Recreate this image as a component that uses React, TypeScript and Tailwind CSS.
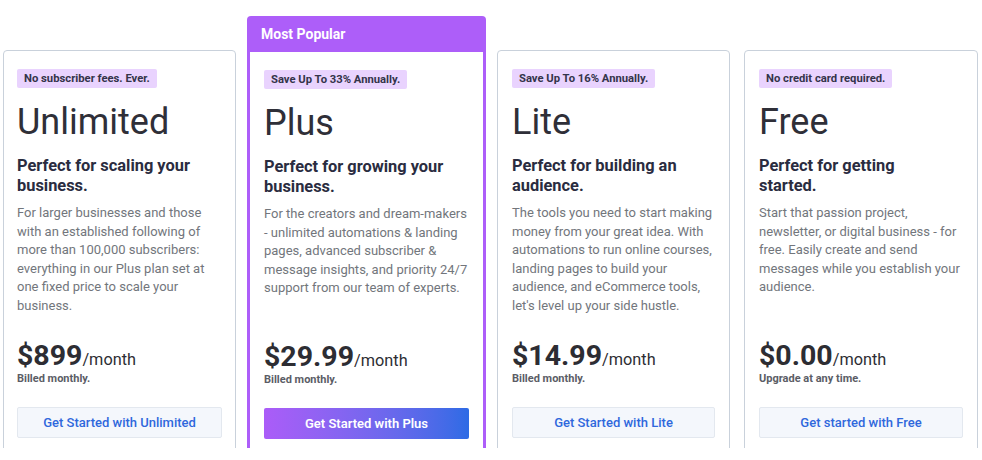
type Plan = {
  badge: string;
  name: string;
  tagline: string;
  desc: string;
  price: string;
  note: string;
  cta: string;
  popular?: boolean;
};

const plans: Plan[] = [
  {
    badge: "No subscriber fees. Ever.",
    name: "Unlimited",
    tagline: "Perfect for scaling your business.",
    desc: "For larger businesses and those with an established following of more than 100,000 subscribers: everything in our Plus plan set at one fixed price to scale your business.",
    price: "$899",
    note: "Billed monthly.",
    cta: "Get Started with Unlimited",
  },
  {
    badge: "Save Up To 33% Annually.",
    name: "Plus",
    tagline: "Perfect for growing your business.",
    desc: "For the creators and dream-makers - unlimited automations & landing pages, advanced subscriber & message insights, and priority 24/7 support from our team of experts.",
    price: "$29.99",
    note: "Billed monthly.",
    cta: "Get Started with Plus",
    popular: true,
  },
  {
    badge: "Save Up To 16% Annually.",
    name: "Lite",
    tagline: "Perfect for building an audience.",
    desc: "The tools you need to start making money from your great idea. With automations to run online courses, landing pages to build your audience, and eCommerce tools, let's level up your side hustle.",
    price: "$14.99",
    note: "Billed monthly.",
    cta: "Get Started with Lite",
  },
  {
    badge: "No credit card required.",
    name: "Free",
    tagline: "Perfect for getting started.",
    desc: "Start that passion project, newsletter, or digital business - for free. Easily create and send messages while you establish your audience.",
    price: "$0.00",
    note: "Upgrade at any time.",
    cta: "Get started with Free",
  },
];

function CardBody({ plan }: { plan: Plan }) {
  return (
    <div className="flex h-[410px] flex-col pt-[18px] pb-[23px]">
      {/* badge */}
      <span className="block h-[19px] self-start rounded-[2px] bg-[#e9d3fe] px-[7px] text-[11.25px] leading-[19px] font-bold text-[#34344a]">
        {plan.badge}
      </span>

      <h2 className="mt-[13px] text-[36px] leading-[43px] font-normal text-[#2f2f38]">
        {plan.name}
      </h2>

      <h3 className="mt-[12px] max-w-[188px] text-[16.4px] leading-[20px] font-bold text-[#2a2c40]">
        {plan.tagline}
      </h3>

      <p className="mt-[8px] flex-1 text-[13px] leading-[18.5px] text-[#72767c]">
        {plan.desc}
      </p>

      {/* price */}
      <div className="leading-[33px] text-[#2d2d33]">
        <span className="text-[28.5px] font-bold">{plan.price}</span>
        <span className="text-[16.3px] leading-[20px]">/month</span>
      </div>
      <div className="-mt-[4px] text-[11px] leading-[14px] font-bold text-[#5b5d66]">
        {plan.note}
      </div>

      {plan.popular ? (
        <button className="mt-[21px] h-[31px] w-full rounded-[2px] bg-gradient-to-r from-[#ab5cf8] to-[#2c6be5] text-[13px] font-semibold text-white">
          {plan.cta}
        </button>
      ) : (
        <button className="mt-[21px] h-[31px] w-full rounded-[2px] border border-[#e3e8ef] bg-[#f4f7fc] text-[13px] font-medium text-[#2f68dc]">
          {plan.cta}
        </button>
      )}
    </div>
  );
}

export default function App() {
  return (
    <div
      className="h-[460px] w-[982px] bg-white"
      style={{ fontFamily: "Roboto, 'Liberation Sans', sans-serif" }}
    >
      <div className="h-[448px] overflow-hidden pt-[16px] pl-[3px]">
        <div className="flex items-end gap-[11px]">
          {/* Unlimited */}
          <div className="w-[233px] rounded-[4px] border border-[#c9d1db] px-[13px]">
            <CardBody plan={plans[0]} />
          </div>

          {/* Plus - most popular */}
          <div className="w-[239px] overflow-hidden rounded-t-[4px] bg-[#ad5ef9]">
            <div className="flex h-[36px] items-center px-[14px] text-[14px] font-bold text-white">
              Most Popular
            </div>
            <div className="mx-[3px] bg-white px-[14px]">
              <CardBody plan={plans[1]} />
            </div>
          </div>

          {/* Lite */}
          <div className="w-[233px] rounded-[4px] border border-[#c9d1db] px-[14px]">
            <CardBody plan={plans[2]} />
          </div>

          {/* Free */}
          <div className="ml-[3px] w-[234px] rounded-[4px] border border-[#c9d1db] px-[14px]">
            <CardBody plan={plans[3]} />
          </div>
        </div>
      </div>
    </div>
  );
}
